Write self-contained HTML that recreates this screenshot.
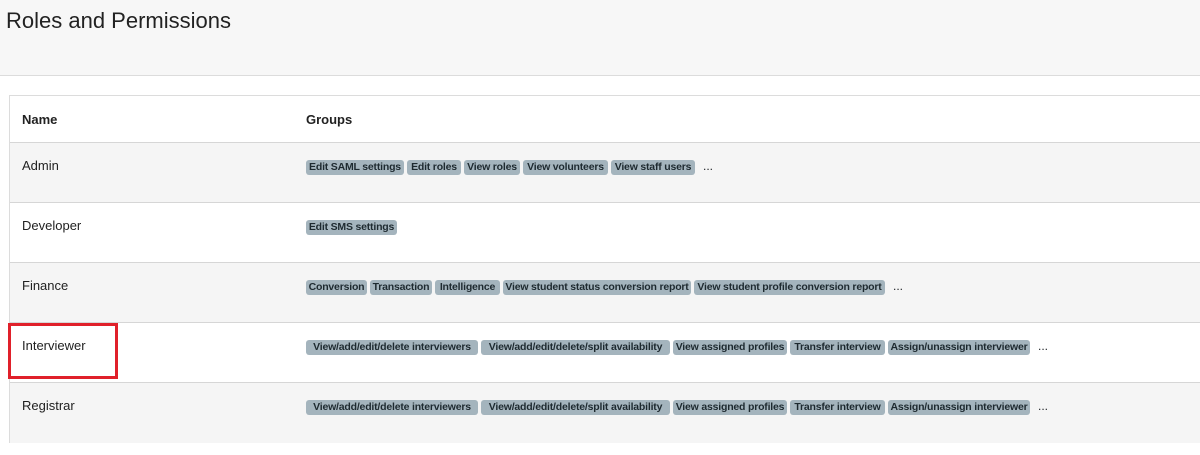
<!DOCTYPE html>
<html><head><style>
body{margin:0;width:1200px;height:455px;background:#fff;font-family:"Liberation Sans",sans-serif;color:#212529;overflow:hidden;position:relative}
.hdr{position:absolute;left:0;top:0;width:1200px;height:75px;background:#f7f7f7;border-bottom:1px solid #dcdcdc}
.hdr h1{margin:0;position:absolute;left:6px;top:8px;font-size:22px;font-weight:normal;color:#222}
.tbl{position:absolute;left:9px;top:95px;width:1200px;height:346px;border:1px solid #dcdcdc;border-right:none}
.row{position:absolute;left:0;width:100%;border-top:1px solid #d6d6d6}
.g{background:#f5f5f5}
.name{position:absolute;left:12px;top:15px;font-size:13px;color:#222}
.th{font-weight:bold;font-size:13px;top:16px}
.badges{position:absolute;left:296px;white-space:nowrap;font-size:0}
.b{display:inline-block;height:15px;line-height:15px;background:#a4b4bd;color:#1e2a30;font-size:10.5px;font-weight:bold;border-radius:3px;margin-right:3px;text-align:center;overflow:hidden;letter-spacing:-0.2px;vertical-align:top}
.dots{display:inline-block;font-size:12px;margin-left:5px;vertical-align:top;line-height:13px}
.red{position:absolute;left:8px;top:323px;width:104px;height:50px;border:3px solid #e0202a}
</style></head><body>
<div class="hdr"><h1>Roles and Permissions</h1></div>
<div class="tbl">
 <div class="row" style="top:0;height:46px;border-top:none"><div class="name th">Name</div><div class="name th" style="left:296px">Groups</div></div>
 <div class="row g" style="top:46px;height:60px"><div class="name">Admin</div><div class="badges" style="top:17px"><span class="b" style="width:98px">Edit SAML settings</span><span class="b" style="width:54px">Edit roles</span><span class="b" style="width:56px">View roles</span><span class="b" style="width:85px">View volunteers</span><span class="b" style="width:84px">View staff users</span><span class="dots">...</span></div></div>
 <div class="row" style="top:106px;height:60px"><div class="name">Developer</div><div class="badges" style="top:17px"><span class="b" style="width:91px">Edit SMS settings</span></div></div>
 <div class="row g" style="top:166px;height:60px"><div class="name">Finance</div><div class="badges" style="top:17px"><span class="b" style="width:61px">Conversion</span><span class="b" style="width:62px">Transaction</span><span class="b" style="width:65px">Intelligence</span><span class="b" style="width:188px">View student status conversion report</span><span class="b" style="width:191px">View student profile conversion report</span><span class="dots">...</span></div></div>
 <div class="row" style="top:226px;height:60px"><div class="name">Interviewer</div><div class="badges" style="top:17px"><span class="b" style="width:172px">View/add/edit/delete interviewers</span><span class="b" style="width:189px">View/add/edit/delete/split availability</span><span class="b" style="width:114px">View assigned profiles</span><span class="b" style="width:95px">Transfer interview</span><span class="b" style="width:142px">Assign/unassign interviewer</span><span class="dots">...</span></div></div>
 <div class="row g" style="top:286px;height:60px"><div class="name">Registrar</div><div class="badges" style="top:17px"><span class="b" style="width:172px">View/add/edit/delete interviewers</span><span class="b" style="width:189px">View/add/edit/delete/split availability</span><span class="b" style="width:114px">View assigned profiles</span><span class="b" style="width:95px">Transfer interview</span><span class="b" style="width:142px">Assign/unassign interviewer</span><span class="dots">...</span></div></div>
</div>
<div class="red"></div>
</body></html>
